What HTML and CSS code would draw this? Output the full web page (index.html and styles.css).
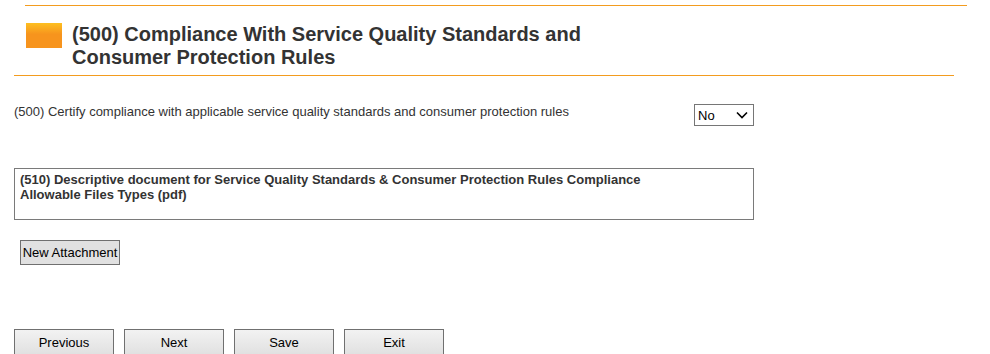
FILE: index.html
```html
<!DOCTYPE html>
<html lang="en">
<head>
    <meta charset="UTF-8">
    <title>(500) Compliance With Service Quality Standards</title>
    <link rel="stylesheet" href="styles.css">
</head>
<body>
    <div class="top-rule"></div>

    <div class="section-header">
        <div class="section-icon"></div>
        <h1>(500) Compliance With Service Quality Standards and Consumer Protection Rules</h1>
    </div>
    <div class="section-rule"></div>

    <div class="question-row">
        <label for="certify">(500) Certify compliance with applicable service quality standards and consumer protection rules</label>
        <div class="select-wrap">
            <select id="certify">
                <option>No</option>
                <option>Yes</option>
            </select>
            <svg class="select-arrow" width="12" height="8" viewBox="0 0 12 8">
                <path d="M1 1.5 L6 6.5 L11 1.5" fill="none" stroke="#000" stroke-width="1.6"/>
            </svg>
        </div>
    </div>

    <div class="attachment-box">
        <p>(510) Descriptive document for Service Quality Standards &amp; Consumer Protection Rules Compliance</p>
        <p>Allowable Files Types (pdf)</p>
    </div>

    <button class="btn-attach">New Attachment</button>

    <div class="nav-buttons">
        <button class="btn-nav">Previous</button>
        <button class="btn-nav">Next</button>
        <button class="btn-nav">Save</button>
        <button class="btn-nav">Exit</button>
    </div>
</body>
</html>
```

FILE: styles.css
```css
/* form page */
* {
    box-sizing: border-box;
}

body {
    margin: 0;
    padding: 5px 0 0 0;
    background-color: #fff;
    color: #333;
    font-family: "Liberation Sans", Arial, sans-serif;
}

.top-rule {
    margin-left: 25px;
    width: 942px;
    border-top: 1px solid #f39c1f;
}

.section-header {
    display: flex;
    align-items: flex-start;
    padding: 17px 0 0 26px;
    height: 69px;
}

.section-icon {
    width: 36px;
    height: 25px;
    background: linear-gradient(to bottom, #fdbf20, #f7941d 45%, #f7941d);
}

h1 {
    margin: 0 0 0 10px;
    width: 540px;
    font-size: 20px;
    font-weight: bold;
    color: #333;
}

.section-rule {
    margin-left: 14px;
    width: 940px;
    border-top: 1px solid #f39c1f;
}

.question-row {
    display: flex;
    justify-content: space-between;
    align-items: flex-start;
    width: 754px;
    padding: 28px 0 0 14px;
}

.question-row label {
    font-size: 13px;
    line-height: 15px;
}

.select-wrap {
    position: relative;
}

.select-wrap select {
    display: block;
    width: 60px;
    height: 22px;
    padding: 0 0 0 3px;
    font-family: "Liberation Sans", Arial, sans-serif;
    font-size: 13px;
    color: #000;
    border: 1px solid #767676;
    background: #fff;
    border-radius: 0;
    appearance: none;
    -webkit-appearance: none;
}

.select-arrow {
    position: absolute;
    right: 6px;
    top: 7px;
    pointer-events: none;
}

.attachment-box {
    margin: 42px 0 0 14px;
    width: 740px;
    height: 52px;
    border: 1px solid #7a7a7a;
    padding: 3px 5px;
}

.attachment-box p {
    margin: 0;
    font-size: 13px;
    line-height: 15px;
    font-weight: bold;
}

button {
    font-family: "Liberation Sans", Arial, sans-serif;
    font-size: 13px;
    color: #000;
    background: linear-gradient(to bottom, #f2f2f2, #e1e1e1);
    border: 1px solid #707070;
    border-radius: 0;
    cursor: pointer;
    padding: 0;
}

.btn-attach {
    display: block;
    margin: 20px 0 0 20px;
    width: 100px;
    height: 25px;
    background: #e1e1e1;
}

.nav-buttons {
    display: flex;
    gap: 10px;
    margin: 64px 0 0 14px;
}

.btn-nav {
    width: 100px;
    height: 26px;
}
```
